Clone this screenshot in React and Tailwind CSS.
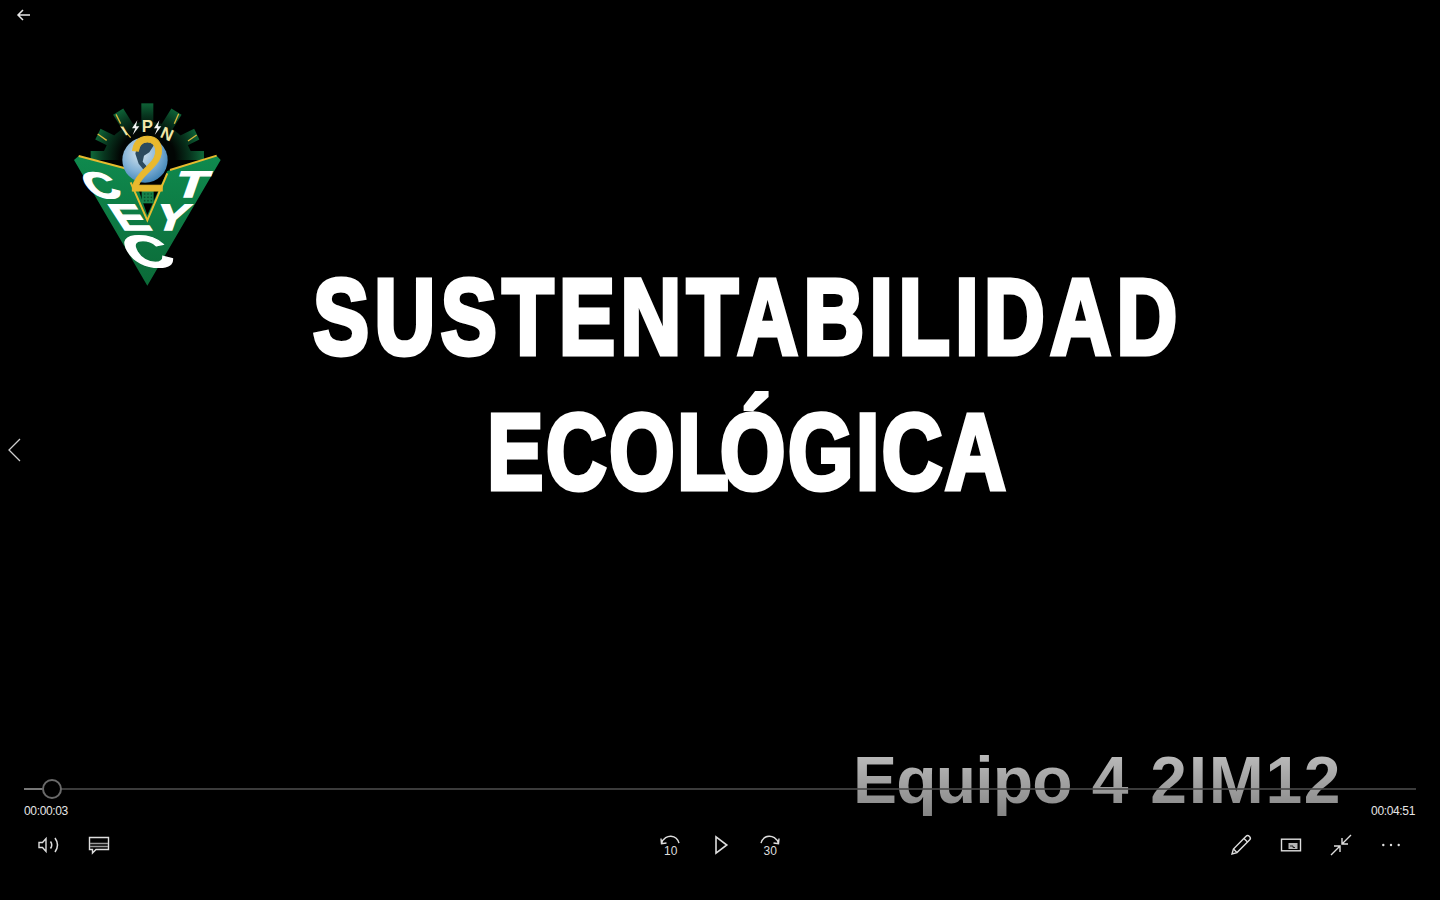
import React from "react";

const Icon = ({ children, className = "" }) => (
  <svg viewBox="0 0 24 24" fill="none" stroke="currentColor" strokeWidth="1.4" className={`w-6 h-6 ${className}`}>
    {children}
  </svg>
);

function Logo() {
  const gearTeeth = [-64, -32, 0, 32, 64];
  return (
    <svg viewBox="0 0 525 600" className="absolute left-[60px] top-[95px] w-[175px] h-[200px]">
      <defs>
        <radialGradient id="gear" gradientUnits="userSpaceOnUse" cx="262" cy="190" r="165">
          <stop offset="0.5" stopColor="#020604" />
          <stop offset="0.78" stopColor="#07351e" />
          <stop offset="1" stopColor="#0e6236" />
        </radialGradient>
        <radialGradient id="globe" cx="0.4" cy="0.35" r="0.75">
          <stop offset="0" stopColor="#d9e6ee" />
          <stop offset="0.55" stopColor="#7fb0d6" />
          <stop offset="1" stopColor="#2f78ad" />
        </radialGradient>
        <linearGradient id="shield" x1="0" y1="0" x2="0" y2="1">
          <stop offset="0" stopColor="#0f8a4e" />
          <stop offset="1" stopColor="#0b6a38" />
        </linearGradient>
      </defs>

      {/* gear */}
      <g fill="url(#gear)">
        <path d="M92 195 V168 H132 A140 140 0 0 1 392 168 H432 V195 Z" />
        {gearTeeth.map((a) => (
          <rect key={a} x="244" y="25" width="36" height="60" transform={`rotate(${a} 262 190)`} />
        ))}
      </g>
      <g stroke="#d9b63c" strokeWidth="4">
        <path d="M168 58 L182 86 M113 117 L140 136 M356 56 L343 86 M410 120 L384 138 M182 94 L212 128" />
      </g>

      {/* shield */}
      <path d="M42 195 L56 183 L215 225 L262 360 L322 228 L470 182 L482 195 L262 572 Z" fill="url(#shield)" />
      <path d="M56 183 L215 225 M470 182 L330 225 M212 262 L262 376 L322 235" fill="none" stroke="#e6bb2e" strokeWidth="6" />
      <rect x="245" y="287" width="36" height="38" fill="#17824a" />
      <g fill="#0a4d2a">
        <circle cx="254" cy="297" r="2.5" /><circle cx="264" cy="297" r="2.5" /><circle cx="274" cy="297" r="2.5" />
        <circle cx="254" cy="307" r="2.5" /><circle cx="264" cy="307" r="2.5" /><circle cx="274" cy="307" r="2.5" />
        <circle cx="254" cy="317" r="2.5" /><circle cx="264" cy="317" r="2.5" /><circle cx="274" cy="317" r="2.5" />
      </g>

      {/* globe */}
      <circle cx="255" cy="195" r="68" fill="url(#globe)" />
      <path d="M232 150 L268 138 L282 150 L268 172 L252 182 L248 200 L262 216 L252 226 L236 206 L226 176 Z" fill="#2c4a5e" />
      <text x="262" y="288" textAnchor="middle" fontFamily="Liberation Sans" fontSize="232" fill="#e9b92e" stroke="#e9b92e" strokeWidth="3" transform="translate(262 0) scale(0.85 1) translate(-262 0)">2</text>

      {/* IPN */}
      <g fontFamily="Liberation Sans" fontWeight="700" fill="#f2e6a8" textAnchor="middle">
        <text x="194" y="122" fontSize="42" transform="rotate(-30 194 108)">I</text>
        <text x="262" y="110" fontSize="50">P</text>
        <text x="322" y="134" fontSize="50" transform="rotate(24 322 115)">N</text>
      </g>
      <path d="M232 76 L216 100 L226 100 L218 120 L238 94 L228 94 Z M298 76 L282 100 L292 100 L284 120 L304 94 L294 94 Z" fill="#f4f4f4" />

      {/* CECyT */}
      <g fontFamily="Liberation Sans" fontWeight="700" fill="#fff" stroke="#fff" strokeWidth="4">
        <text transform="matrix(1.2 0 0.65 1 100 310)" fontSize="110">C</text>
        <text transform="matrix(1.3 0 0.65 1 185 405)" fontSize="110">E</text>
        <text transform="matrix(1.35 0 0.6 1 225 515)" fontSize="135">C</text>
        <text transform="matrix(1.3 0 -0.35 1 277 405)" fontSize="110">Y</text>
        <text transform="matrix(1.4 0 -0.35 1 337 305)" fontSize="110">T</text>
      </g>
    </svg>
  );
}

export default function App() {
  return (
    <div className="relative w-full h-screen overflow-hidden bg-black flex flex-col text-[#e6e6e6] font-['Liberation_Sans',sans-serif]">
      {/* slide content */}
      <Logo />
      <div className="absolute left-[853px] top-[744px] whitespace-nowrap text-[66px] leading-[72px] font-bold tracking-[1.7px] text-transparent bg-clip-text bg-gradient-to-b from-[#c4c4c4] to-[#858585]">
        <span className="tracking-[-0.8px]">Equipo</span> 4 2IM12
      </div>

      <header className="relative h-[30px] shrink-0 flex items-center pl-3">
        <Icon className="text-[#e8e8e8]">
          <path d="M18 12H6.5M11 7l-5 5 5 5" strokeWidth="1.5" />
        </Icon>
      </header>

      <main className="relative flex-1 flex flex-col items-center justify-center pb-[38px] pl-[56px] text-white font-bold text-[107px] leading-[135px] whitespace-nowrap">
        <div className="scale-x-[0.785] tracking-[7px] [-webkit-text-stroke:5px_white]">SUSTENTABILIDAD</div>
        <div className="scale-x-[0.785] tracking-[3.3px] [-webkit-text-stroke:5px_white]">
          ECOL<span className="-ml-[14px]">ÓGICA</span>
        </div>
      </main>

      <button className="absolute left-[3px] top-[438px] text-[#cfcfcf]">
        <Icon className="w-6 h-6">
          <path d="M17 1L6 12l11 11" strokeWidth="1.3" />
        </Icon>
      </button>

      <footer className="relative shrink-0 px-6 pb-8">
        {/* scrubber */}
        <div className="relative h-[22px] flex items-center">
          <div className="h-[2px] w-full bg-[#4a4a4a]/80" />
          <div className="absolute left-0 h-[2px] w-[18px] bg-[#777]" />
          <div className="absolute left-[18px] top-[1px] w-5 h-5 rounded-full border-2 border-[#6a6a6a] bg-black" />
        </div>
        <div className="h-[22px] flex items-center justify-between text-[12px] tracking-[-0.35px]">
          <span>00:00:03</span>
          <span className="pr-[1px]">00:04:51</span>
        </div>

        {/* controls */}
        <div className="h-[46px] flex items-center text-[#dedede]">
          <div className="flex-1 flex">
            <button className="w-[50px] flex justify-center">
              <Icon>
                <path d="M2 9.5h3.5L9 5.5v13l-3.5-4H2z" />
                <path d="M13.5 8.5q2.5 3.5 0 7M18 5q5 7 0 14" strokeWidth="1.5" />
              </Icon>
            </button>
            <button className="w-[50px] flex justify-center">
              <Icon>
                <path d="M2.5 4.5h19v12H9l-3.5 3.5v-3.5h-3z" />
                <path d="M3 10.5h18M3 13.5h18" stroke="#999" />
              </Icon>
            </button>
          </div>

          <div className="flex">
            <button className="w-[50px] flex justify-center">
              <Icon>
                <path d="M3.5 10.5C5 5 10 3 13 3.2c4 .3 7 3 8 7M3 5.5l.5 5.2 5-.7" />
                <text x="6" y="21.5" fontFamily="Liberation Sans" fontSize="12" fill="currentColor" stroke="none">10</text>
              </Icon>
            </button>
            <button className="w-[50px] flex justify-center">
              <Icon>
                <path d="M8 3.8v16.4L18.8 12z" strokeWidth="1.6" />
              </Icon>
            </button>
            <button className="w-[50px] flex justify-center">
              <Icon>
                <path d="M20.5 10.5C19 5 14 3 11 3.2c-4 .3-7 3-8 7M21 5.5l-.5 5.2-5-.7" />
                <text x="5.5" y="21.5" fontFamily="Liberation Sans" fontSize="12" fill="currentColor" stroke="none">30</text>
              </Icon>
            </button>
          </div>

          <div className="flex-1 flex justify-end">
            <button className="w-[50px] flex justify-center">
              <Icon>
                <path d="M3 21l1.4-5L16.8 3.4a2.6 2.6 0 0 1 3.7 3.7L8 19.6z" />
                <path d="M15 5.5l3.5 3.5M4.5 16l3.4 3.4" />
              </Icon>
            </button>
            <button className="w-[50px] flex justify-center">
              <Icon>
                <rect x="2.5" y="6.2" width="19" height="11.6" />
                <rect x="9.5" y="10" width="9" height="6" fill="#b5b5b5" stroke="none" />
                <path d="M11 13h3v1.5h2" stroke="#222" strokeWidth="1" />
              </Icon>
            </button>
            <button className="w-[50px] flex justify-center">
              <Icon>
                <path d="M2 22l9-9M5 13h6v6M22 2l-9 9M19 11h-6V5" />
              </Icon>
            </button>
            <button className="w-[50px] flex justify-center">
              <Icon>
                <g fill="currentColor" stroke="none">
                  <circle cx="4.3" cy="12" r="1.2" />
                  <circle cx="12" cy="12" r="1.2" />
                  <circle cx="19.7" cy="12" r="1.2" />
                </g>
              </Icon>
            </button>
          </div>
        </div>
      </footer>
    </div>
  );
}
